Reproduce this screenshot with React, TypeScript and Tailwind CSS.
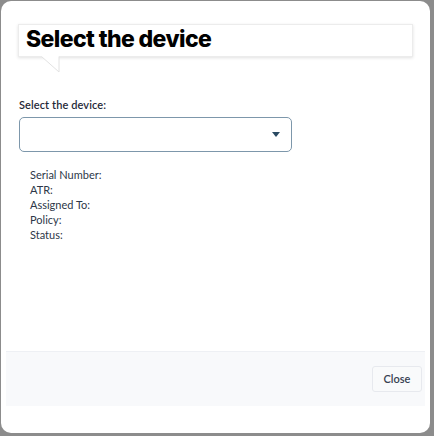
const fields = ["Serial Number:", "ATR:", "Assigned To:", "Policy:", "Status:"];

export default function App() {
  return (
    <div className="w-[434px] h-[436px] bg-[#8c8c8c] pt-[1px] pl-[1px]" style={{ fontFamily: "Lato, 'Noto Sans', sans-serif" }}>
      <div className="w-[429px] h-[432px] bg-white rounded-[10px] flex flex-col pt-[23px]">
        {/* speech-bubble title */}
        <div className="relative mx-[17px]">
          <div className="h-[33px] bg-white border border-[#ececec] shadow-[0_1px_3px_rgba(0,0,0,0.12)] flex items-center pl-[7px] pb-[3px]">
            <h1
              className="text-[23px] font-extrabold text-black tracking-[-0.6px] leading-none"
              style={{ fontFamily: "Inter, 'Liberation Sans', sans-serif" }}
            >
              Select the device
            </h1>
          </div>
          <svg className="absolute left-[23px] top-[32px]" width="20" height="17" viewBox="0 0 20 17">
            <polygon points="0,0 18,0 18,16" fill="white" />
            <polyline points="0.5,0.5 18,16 18,0.5" fill="none" stroke="#e2e2e2" strokeWidth="1" />
          </svg>
        </div>

        <div className="px-[18px] pt-[41px]">
          <label className="block text-[11px] leading-[14px] text-[#1f2937] font-semibold tracking-[0.1px] mb-[5px]">
            Select the device:
          </label>
          <div className="w-[273px] h-[35px] border border-[#7d97ab] rounded-[5px] flex items-center justify-end pr-[11px]">
            <svg width="8" height="5" viewBox="0 0 8 5">
              <polygon points="0,0 8,0 4,5" fill="#2a4a62" />
            </svg>
          </div>
          <div className="pl-[11px] pt-[15px] flex flex-col">
            {fields.map((f) => (
              <div key={f} className="text-[11px] leading-[15px] text-[#2d3748]">
                {f}
              </div>
            ))}
          </div>
        </div>

        <div className="mt-auto mb-[27px] mx-[5px] h-[55px] bg-[#f8f9fb] border-t border-[#eef0f4] flex items-center justify-end pr-[3px]">
          <button className="w-[50px] h-[26px] bg-[#f9fafb] border border-[#e7e9ee] rounded-[3px] text-[11px] font-semibold text-[#374151]">
            Close
          </button>
        </div>
      </div>
    </div>
  );
}
